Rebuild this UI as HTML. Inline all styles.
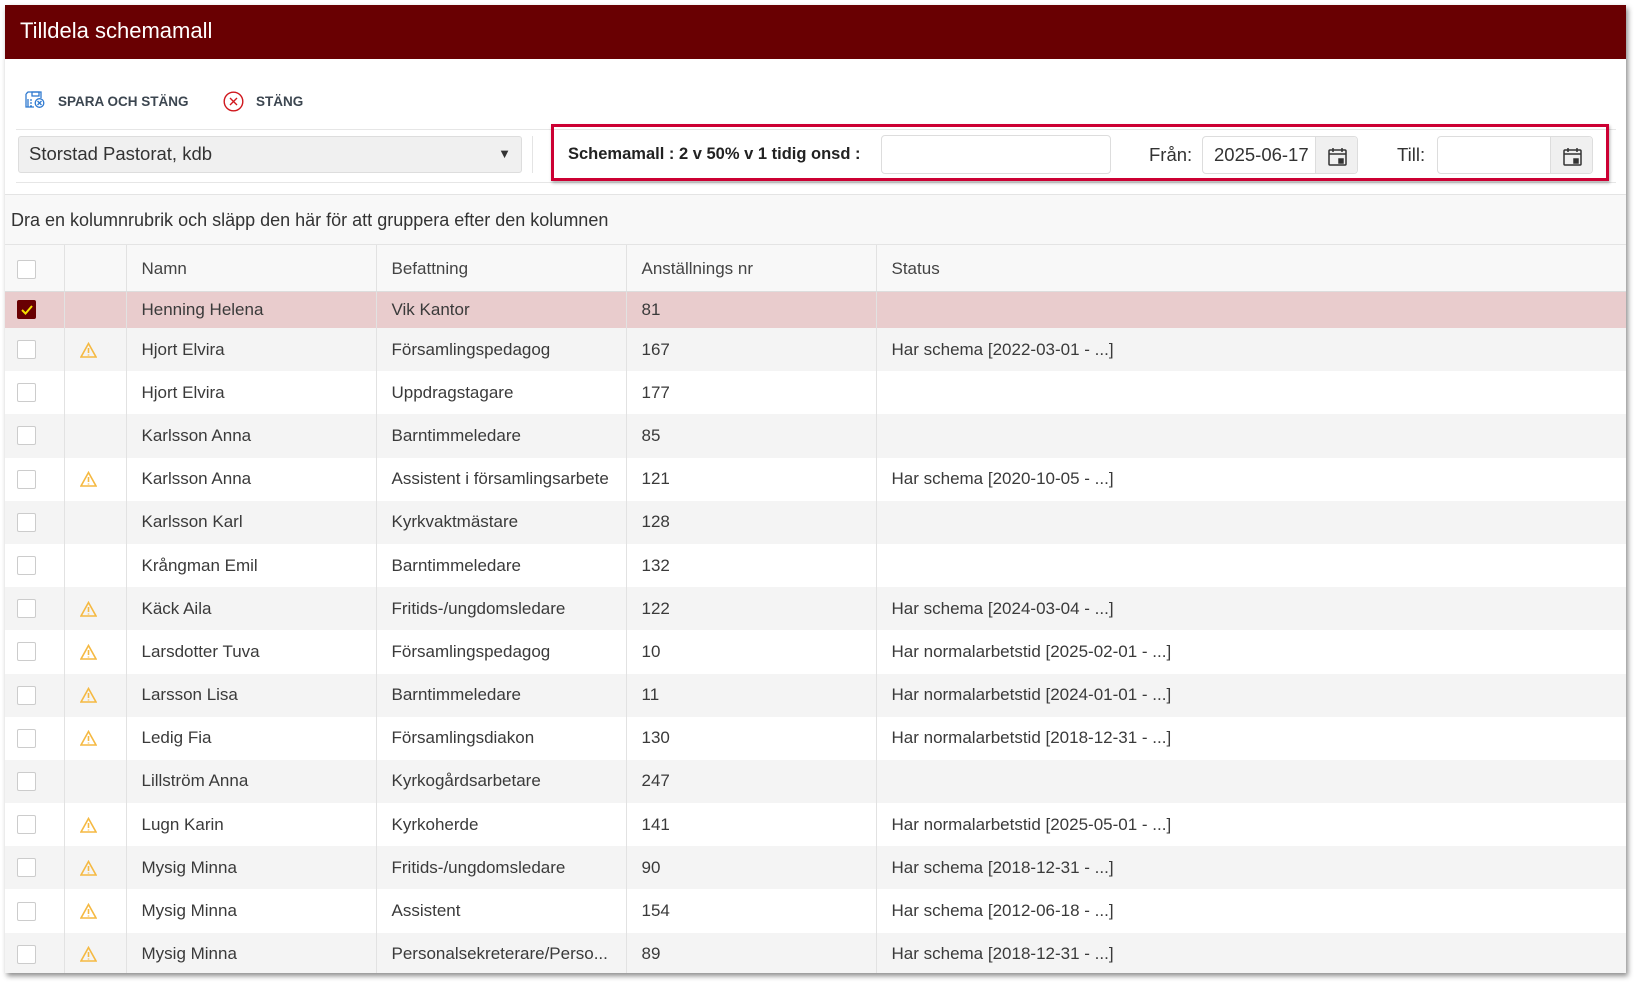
<!DOCTYPE html>
<html><head><meta charset="utf-8"><style>
*{box-sizing:border-box;margin:0;padding:0}
body{width:1635px;height:982px;background:#fff;font-family:"Liberation Sans",sans-serif;color:#333;position:relative;overflow:hidden}
.win{position:absolute;left:5px;top:5px;width:1621px;height:968px;background:#fff;box-shadow:2px 3px 5px rgba(0,0,0,.45);overflow:hidden}
.title{position:absolute;left:0;top:0;width:100%;height:54px;background:#690002;color:#fff;font-size:22px;padding-left:15px;line-height:52px}
.abs{position:absolute}
.tb{font-weight:bold;font-size:13.5px;color:#3c4650;top:89px}
.hline{position:absolute;height:1px;background:#e6e6e6}
.dd{left:13px;top:131px;width:504px;height:37px;background:#f0f0f0;border:1px solid #ddd;border-radius:3px;font-size:18.5px;padding-left:10px;line-height:34px;color:#333}
.red{left:546px;top:119px;width:1058px;height:57px;border:3px solid #cc0033;box-shadow:1px 2px 3px rgba(0,0,0,.3)}
.inp{border:1px solid #ddd;border-radius:4px;background:#fff}
.btn{position:absolute;right:0;top:0;width:42px;height:100%;background:#f0f0f0;border-left:1px solid #ddd;border-radius:0 4px 4px 0}
.lbl{font-size:18.5px;color:#333}
.grp{left:0;top:189px;width:100%;height:51px;background:#f8f8f8;border-top:1px solid #e4e4e4;border-bottom:1px solid #e4e4e4;font-size:18px;padding-left:6px;line-height:50px;color:#333}
table{position:absolute;left:0;top:240px;border-collapse:collapse;width:1621px;font-size:17px;color:#3a3a3a}
td{border-left:1px solid #e2e2e2;padding-left:15px;white-space:nowrap;overflow:hidden}
td:first-child{border-left:none;padding-left:0}
td:nth-child(2){padding-left:0}
th{font-weight:normal;text-align:left;border-left:1px solid #e2e2e2;padding-left:15px;height:46px;background:#f8f8f8;color:#444;border-bottom:1px solid #ddd;padding-top:3px}
th:first-child{border-left:none;padding-left:0}
tr.r td{height:43.2px}
tr.s td{height:37px;background:#e9cccd}
tr.g td{background:#f4f4f4}
tr.w td{background:#fff}
.cb{display:block;width:19px;height:19px;border:1px solid #ccc;border-radius:2px;background:#fff;margin-left:12px}
.cb.on{background:#690002;border-color:#690002;position:relative}
.wi{display:block;margin-left:15px}
</style></head><body>
<div class="win">
<div class="title">Tilldela schemamall</div>
<svg class="abs" style="left:20px;top:86px" width="22" height="17" viewBox="0 0 22 17" fill="none" stroke="#2f7ad0" stroke-width="1.3"><path d="M1 3v13h8M1 3l2-2h13v6"/><rect x="7" y="1" width="7" height="4"/><path d="M3 8v8M5 9h2M5 12h2M5 15h2"/><circle cx="14.5" cy="12" r="4.3"/><path d="M12.5 10l4 4M16.5 10l-4 4"/></svg>
<div class="abs tb" style="left:53px">SPARA OCH STÄNG</div>
<svg class="abs" style="left:218px;top:86px" width="21" height="21" viewBox="0 0 21 21" fill="none" stroke="#d0181e" stroke-width="1.4"><circle cx="10.5" cy="10.5" r="9.3"/><path d="M7 7l7 7M14 7l-7 7"/></svg>
<div class="abs tb" style="left:251px">STÄNG</div>
<div class="hline" style="left:11px;top:124px;width:1600px"></div>
<div class="abs dd">Storstad Pastorat, kdb<span style="position:absolute;right:10px;top:0;font-size:13px">▼</span></div>
<div class="abs" style="left:527px;top:131px;width:1px;height:37px;background:#e4e4e4"></div>
<div class="hline" style="left:11px;top:177px;width:1600px"></div>
<div class="abs red"></div>
<div class="abs" style="left:563px;top:140px;font-weight:bold;font-size:16.5px;color:#222">Schemamall : 2 v 50% v 1 tidig onsd :</div>
<div class="abs inp" style="left:876px;top:130px;width:230px;height:39px"></div>
<div class="abs lbl" style="left:1144px;top:139px">Från:</div>
<div class="abs inp" style="left:1197px;top:131px;width:156px;height:38px"><span style="position:absolute;left:11px;top:7px;font-size:18.5px">2025-06-17</span><div class="btn"><svg style="margin:10px 0 0 12px" width="19" height="19" viewBox="0 0 19 19" fill="none" stroke="#333" stroke-width="1.5"><rect x="1" y="3" width="17" height="15" rx="1"/><path d="M1 7h17M5 1v4M14 1v4"/><rect x="11" y="12" width="4" height="4" fill="#333"/></svg></div></div>
<div class="abs lbl" style="left:1392px;top:139px">Till:</div>
<div class="abs inp" style="left:1432px;top:131px;width:156px;height:38px"><div class="btn"><svg style="margin:10px 0 0 12px" width="19" height="19" viewBox="0 0 19 19" fill="none" stroke="#333" stroke-width="1.5"><rect x="1" y="3" width="17" height="15" rx="1"/><path d="M1 7h17M5 1v4M14 1v4"/><rect x="11" y="12" width="4" height="4" fill="#333"/></svg></div></div>
<div class="abs grp">Dra en kolumnrubrik och släpp den här för att gruppera efter den kolumnen</div>
<table>
<colgroup><col style="width:59px"><col style="width:62px"><col style="width:250px"><col style="width:250px"><col style="width:250px"><col></colgroup>
<tr><th><span class="cb"></span></th><th></th><th>Namn</th><th>Befattning</th><th>Anställnings nr</th><th>Status</th></tr>
<tr class="s"><td><span class="cb on"><svg style="position:absolute;left:2px;top:3px" width="14" height="12" viewBox="0 0 14 12" fill="none" stroke="#f5e000" stroke-width="2"><path d="M2 6l3.5 3.5L12 2"/></svg></span></td><td></td><td>Henning Helena</td><td>Vik Kantor</td><td>81</td><td></td></tr>
<tr class="r g"><td><span class="cb"></span></td><td><svg class="wi" width="17" height="16" viewBox="0 0 17 16" fill="none" stroke="#f5b942" stroke-width="1.6"><path d="M8.5 1.5L1 15h15z"/><path d="M8.5 6v5M8.5 12.5v1"/></svg></td><td>Hjort Elvira</td><td>Församlingspedagog</td><td>167</td><td>Har schema [2022-03-01 - ...]</td></tr>
<tr class="r w"><td><span class="cb"></span></td><td></td><td>Hjort Elvira</td><td>Uppdragstagare</td><td>177</td><td></td></tr>
<tr class="r g"><td><span class="cb"></span></td><td></td><td>Karlsson Anna</td><td>Barntimmeledare</td><td>85</td><td></td></tr>
<tr class="r w"><td><span class="cb"></span></td><td><svg class="wi" width="17" height="16" viewBox="0 0 17 16" fill="none" stroke="#f5b942" stroke-width="1.6"><path d="M8.5 1.5L1 15h15z"/><path d="M8.5 6v5M8.5 12.5v1"/></svg></td><td>Karlsson Anna</td><td>Assistent i församlingsarbete</td><td>121</td><td>Har schema [2020-10-05 - ...]</td></tr>
<tr class="r g"><td><span class="cb"></span></td><td></td><td>Karlsson Karl</td><td>Kyrkvaktmästare</td><td>128</td><td></td></tr>
<tr class="r w"><td><span class="cb"></span></td><td></td><td>Krångman Emil</td><td>Barntimmeledare</td><td>132</td><td></td></tr>
<tr class="r g"><td><span class="cb"></span></td><td><svg class="wi" width="17" height="16" viewBox="0 0 17 16" fill="none" stroke="#f5b942" stroke-width="1.6"><path d="M8.5 1.5L1 15h15z"/><path d="M8.5 6v5M8.5 12.5v1"/></svg></td><td>Käck Aila</td><td>Fritids-/ungdomsledare</td><td>122</td><td>Har schema [2024-03-04 - ...]</td></tr>
<tr class="r w"><td><span class="cb"></span></td><td><svg class="wi" width="17" height="16" viewBox="0 0 17 16" fill="none" stroke="#f5b942" stroke-width="1.6"><path d="M8.5 1.5L1 15h15z"/><path d="M8.5 6v5M8.5 12.5v1"/></svg></td><td>Larsdotter Tuva</td><td>Församlingspedagog</td><td>10</td><td>Har normalarbetstid [2025-02-01 - ...]</td></tr>
<tr class="r g"><td><span class="cb"></span></td><td><svg class="wi" width="17" height="16" viewBox="0 0 17 16" fill="none" stroke="#f5b942" stroke-width="1.6"><path d="M8.5 1.5L1 15h15z"/><path d="M8.5 6v5M8.5 12.5v1"/></svg></td><td>Larsson Lisa</td><td>Barntimmeledare</td><td>11</td><td>Har normalarbetstid [2024-01-01 - ...]</td></tr>
<tr class="r w"><td><span class="cb"></span></td><td><svg class="wi" width="17" height="16" viewBox="0 0 17 16" fill="none" stroke="#f5b942" stroke-width="1.6"><path d="M8.5 1.5L1 15h15z"/><path d="M8.5 6v5M8.5 12.5v1"/></svg></td><td>Ledig Fia</td><td>Församlingsdiakon</td><td>130</td><td>Har normalarbetstid [2018-12-31 - ...]</td></tr>
<tr class="r g"><td><span class="cb"></span></td><td></td><td>Lillström Anna</td><td>Kyrkogårdsarbetare</td><td>247</td><td></td></tr>
<tr class="r w"><td><span class="cb"></span></td><td><svg class="wi" width="17" height="16" viewBox="0 0 17 16" fill="none" stroke="#f5b942" stroke-width="1.6"><path d="M8.5 1.5L1 15h15z"/><path d="M8.5 6v5M8.5 12.5v1"/></svg></td><td>Lugn Karin</td><td>Kyrkoherde</td><td>141</td><td>Har normalarbetstid [2025-05-01 - ...]</td></tr>
<tr class="r g"><td><span class="cb"></span></td><td><svg class="wi" width="17" height="16" viewBox="0 0 17 16" fill="none" stroke="#f5b942" stroke-width="1.6"><path d="M8.5 1.5L1 15h15z"/><path d="M8.5 6v5M8.5 12.5v1"/></svg></td><td>Mysig Minna</td><td>Fritids-/ungdomsledare</td><td>90</td><td>Har schema [2018-12-31 - ...]</td></tr>
<tr class="r w"><td><span class="cb"></span></td><td><svg class="wi" width="17" height="16" viewBox="0 0 17 16" fill="none" stroke="#f5b942" stroke-width="1.6"><path d="M8.5 1.5L1 15h15z"/><path d="M8.5 6v5M8.5 12.5v1"/></svg></td><td>Mysig Minna</td><td>Assistent</td><td>154</td><td>Har schema [2012-06-18 - ...]</td></tr>
<tr class="r g"><td><span class="cb"></span></td><td><svg class="wi" width="17" height="16" viewBox="0 0 17 16" fill="none" stroke="#f5b942" stroke-width="1.6"><path d="M8.5 1.5L1 15h15z"/><path d="M8.5 6v5M8.5 12.5v1"/></svg></td><td>Mysig Minna</td><td>Personalsekreterare/Perso...</td><td>89</td><td>Har schema [2018-12-31 - ...]</td></tr>
</table>
</div>
</body></html>
